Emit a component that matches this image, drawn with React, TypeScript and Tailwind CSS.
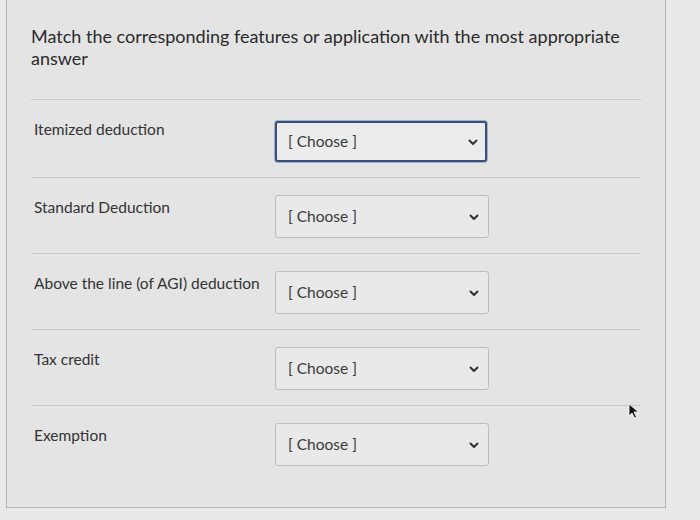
import React from "react";

const rows = [
  "Itemized deduction",
  "Standard Deduction",
  "Above the line (of AGI) deduction",
  "Tax credit",
  "Exemption",
];

function Chevron() {
  return (
    <svg width="12" height="12" viewBox="0 0 12 12" className="text-[#333]">
      <path d="M2.5 4.5 L6 8 L9.5 4.5" fill="none" stroke="currentColor" strokeWidth="2" strokeLinecap="round" strokeLinejoin="round" />
    </svg>
  );
}

function ChooseBox({ focused }: { focused?: boolean }) {
  return (
    <div
      className={
        focused
          ? "flex h-[41px] w-[212px] items-center justify-between rounded-[3px] border-2 border-[#3a4f7a] bg-[#ececec] pl-[11px] pr-[6px] shadow-[0_0_0_1px_#9fb0d0]"
          : "flex h-[43px] w-[214px] items-center justify-between rounded-[3px] border border-[#bdbdbd] bg-[#e9e9e9] pl-3 pr-[8px]"
      }
    >
      <span className="text-[15.5px] text-[#3a3a3a]">[ Choose ]</span>
      <Chevron />
    </div>
  );
}

export default function App() {
  return (
    <div
      className="relative h-[520px] w-[700px] overflow-hidden bg-[#e9e9e9]"
      style={{ fontFamily: "Lato, 'Open Sans', sans-serif" }}
    >
      <div className="ml-[6px] h-[508px] w-[660px] border-b border-l border-r border-[#b5b5b5] bg-[#e4e4e4] pl-[24px] pr-[24px] pt-[25px]">
        <p className="text-[18px] leading-[22px] text-[#2b2b2b]">
          Match the corresponding features or application with the most appropriate answer
        </p>
        <div className="mt-[30px] flex flex-col">
          {rows.map((label, i) => (
            <div key={label} className="flex flex-col">
              <div className="h-px bg-[#c9c9c9]" />
              <div className="flex items-start pb-[15px] pt-[16px]">
                <div className="w-[244px] pl-[3px] pt-[3px] text-[15.5px] leading-[20px] text-[#333]">{label}</div>
                <div className={i === 0 ? "mt-[5px]" : "mt-[1px]"}>
                  <ChooseBox focused={i === 0} />
                </div>
              </div>
            </div>
          ))}
        </div>
      </div>
      <svg className="absolute left-[628px] top-[403px]" width="12" height="16" viewBox="0 0 12 16">
        <path d="M1 1 L1 13 L4 10 L6.5 15 L8.5 14 L6 9 L10.5 9 Z" fill="#111" stroke="#fff" strokeWidth="0.8" />
      </svg>
    </div>
  );
}
